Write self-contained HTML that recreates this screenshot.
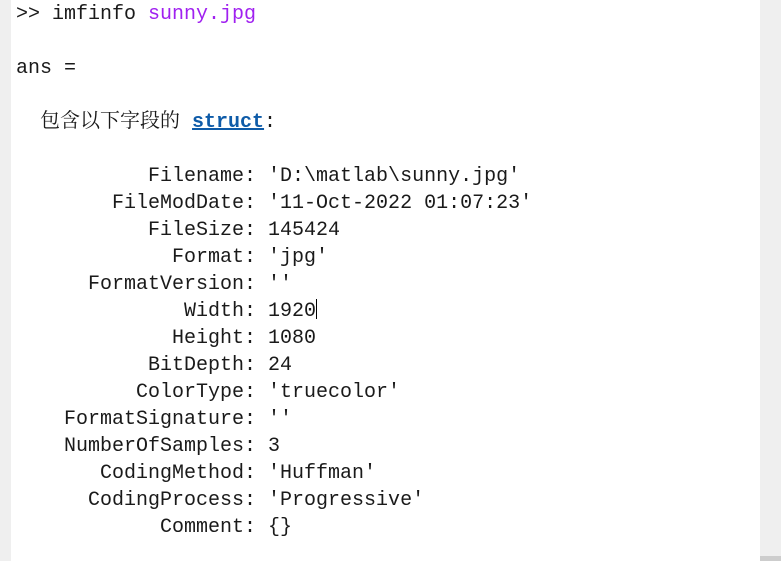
<!DOCTYPE html>
<html><head><meta charset="utf-8"><style>
html,body{margin:0;padding:0;width:781px;height:561px;overflow:hidden;background:#fff}
.l{position:absolute;left:0;top:0;width:11px;height:561px;background:#efefef}
.r{position:absolute;left:760px;top:0;width:21px;height:556px;background:#efefef}
.r2{position:absolute;left:760px;top:556px;width:21px;height:5px;background:#cdcdcd}
.w{position:absolute;left:16px;top:1px;font-family:"Liberation Mono",monospace;font-size:20px;color:#1a1a1a}
.w div{height:27px;line-height:27px;white-space:pre;overflow:visible}
.p{color:#a020f0}
.s{color:#0e5ba8;font-weight:bold;text-decoration:underline}
.z{font-family:"Noto Serif CJK SC",serif;font-size:20px;line-height:20px;display:inline-block;width:140px;letter-spacing:0}
.c{display:inline-block;width:1px;height:20px;background:#000;vertical-align:-3px}
</style></head><body>
<div class="l"></div><div class="r"></div><div class="r2"></div>
<div class="w">
<div>&gt;&gt; imfinfo <span class="p">sunny.jpg</span></div>
<div></div>
<div>ans =</div>
<div></div>
<div>  <span class="z">包含以下字段的</span> <span class="s">struct</span>:</div>
<div></div>
<div>           Filename: 'D:\matlab\sunny.jpg'</div>
<div>        FileModDate: '11-Oct-2022 01:07:23'</div>
<div>           FileSize: 145424</div>
<div>             Format: 'jpg'</div>
<div>      FormatVersion: ''</div>
<div>              Width: 1920<span class="c"></span></div>
<div>             Height: 1080</div>
<div>           BitDepth: 24</div>
<div>          ColorType: 'truecolor'</div>
<div>    FormatSignature: ''</div>
<div>    NumberOfSamples: 3</div>
<div>       CodingMethod: 'Huffman'</div>
<div>      CodingProcess: 'Progressive'</div>
<div>            Comment: {}</div>
</div>
</body></html>
